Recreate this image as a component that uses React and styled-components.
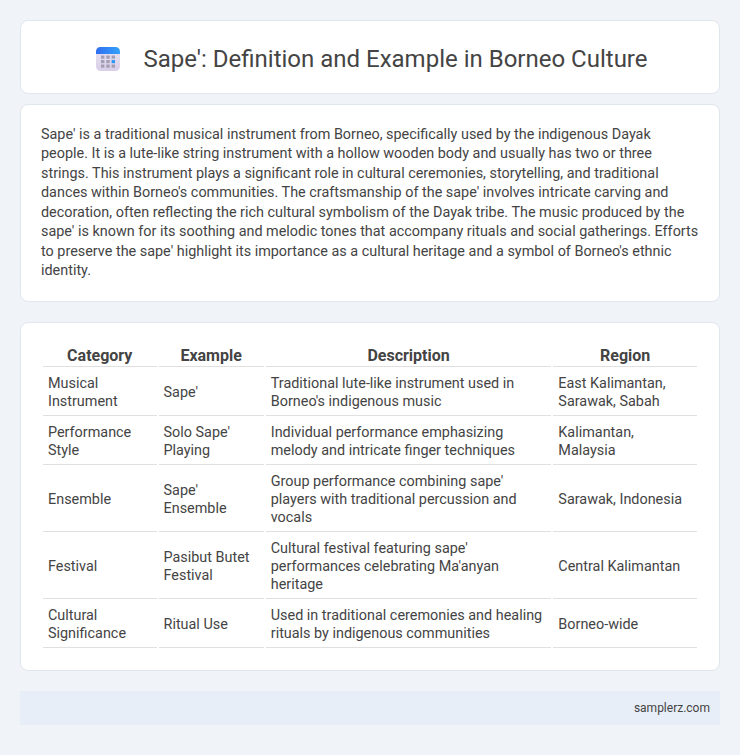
import React from 'react';
import styled, { createGlobalStyle } from 'styled-components';

const Global = createGlobalStyle`
  html, body { margin: 0; padding: 0; background: #f0f4f8; }
  body { font-family: Roboto, "Liberation Sans", sans-serif; color: #444; }
`;
const Page = styled.div`
  padding: 20px;
  display: flex;
  flex-direction: column;
`;
const Card = styled.section`
  background: #fff;
  border: 1px solid #e0e6ed;
  border-radius: 8px;
  box-sizing: border-box;
`;
const HeaderCard = styled(Card)`
  height: 74px;
  padding: 3px 0 0 4px;
  display: flex;
  align-items: center;
  justify-content: center;
  gap: 23px;
  margin-bottom: 10px;
`;
const Title = styled.h1`
  margin: 0;
  padding-top: 2px;
  font-size: 24px;
  font-weight: 400;
  line-height: 1.2;
  color: #444;
`;
const IntroCard = styled(Card)`
  height: 198px;
  padding: 20px 20px 0 20px;
  margin-bottom: 20px;
`;
const Intro = styled.p`
  margin: 0;
  font-size: 14.4px;
  line-height: 1.35;
  color: #444;
`;
const TableCard = styled(Card)`
  height: 349px;
  padding: 20px;
  margin-bottom: 20px;
`;
const Table = styled.table`
  width: 100%;
  border-collapse: separate;
  border-spacing: 2px;
  font-size: 14.4px;
  line-height: 18px;
  color: #444;
`;
const Th = styled.th`
  font-size: 16px;
  font-weight: 700;
  line-height: 20px;
  padding: 1px 5px 0;
  text-align: center;
  border-bottom: 1px solid #e0e0e0;
`;
const Td = styled.td`
  padding: 6px 5px 4px;
  text-align: left;
  border-bottom: 1px solid #e0e0e0;
`;
const Footer = styled.footer`
  height: 34px;
  background: #e8eef7;
  display: flex;
  align-items: center;
  justify-content: flex-end;
  padding-right: 10px;
  font-size: 12px;
  color: #444;
`;

const dotColumns = [5, 10.3, 15.6];
const dotRows = [8.5, 13, 17.5];

const CalendarIcon = () => (
  <svg width="24" height="24" viewBox="0 0 24 24" aria-hidden="true">
    <defs>
      <linearGradient id="bodyG" x1="0" y1="0" x2="0" y2="1">
        <stop offset="0" stopColor="#e8e3f1" />
        <stop offset="1" stopColor="#d9cfe8" />
      </linearGradient>
      <linearGradient id="topG" x1="0" y1="0" x2="1" y2="0">
        <stop offset="0" stopColor="#2f6df0" />
        <stop offset="1" stopColor="#35a2fa" />
      </linearGradient>
    </defs>
    <rect x="0" y="0" width="24" height="24" rx="4.5" fill="url(#bodyG)" />
    <path d="M0 7V4.5A4.5 4.5 0 0 1 4.5 0h15A4.5 4.5 0 0 1 24 4.5V7Z" fill="url(#topG)" />
    {dotRows.map((y, r) =>
      dotColumns.map((x, c) => (
        <rect
          key={`${r}-${c}`}
          x={x}
          y={y}
          width="3.4"
          height="3.2"
          fill={r === 1 && c === 2 ? '#2f96f5' : '#a49eb4'}
        />
      ))
    )}
  </svg>
);

const rows = [
  ['Musical Instrument', "Sape'", "Traditional lute-like instrument used in Borneo's indigenous music", 'East Kalimantan, Sarawak, Sabah'],
  ['Performance Style', "Solo Sape' Playing", 'Individual performance emphasizing melody and intricate finger techniques', 'Kalimantan, Malaysia'],
  ['Ensemble', "Sape' Ensemble", "Group performance combining sape' players with traditional percussion and vocals", 'Sarawak, Indonesia'],
  ['Festival', 'Pasibut Butet Festival', "Cultural festival featuring sape' performances celebrating Ma'anyan heritage", 'Central Kalimantan'],
  ['Cultural Significance', 'Ritual Use', 'Used in traditional ceremonies and healing rituals by indigenous communities', 'Borneo-wide'],
];

export default function App() {
  return (
    <Page>
      <Global />
      <HeaderCard>
        <CalendarIcon />
        <Title>Sape': Definition and Example in Borneo Culture</Title>
      </HeaderCard>
      <IntroCard>
        <Intro>
          Sape' is a traditional musical instrument from Borneo, specifically used by the indigenous Dayak people. It is a lute-like string instrument with a hollow wooden body and usually has two or three strings. This instrument plays a significant role in cultural ceremonies, storytelling, and traditional dances within Borneo's communities. The craftsmanship of the sape' involves intricate carving and decoration, often reflecting the rich cultural symbolism of the Dayak tribe. The music produced by the sape' is known for its soothing and melodic tones that accompany rituals and social gatherings. Efforts to preserve the sape' highlight its importance as a cultural heritage and a symbol of Borneo's ethnic identity.
        </Intro>
      </IntroCard>
      <TableCard>
        <Table>
          <thead>
            <tr>
              <Th>Category</Th>
              <Th>Example</Th>
              <Th>Description</Th>
              <Th>Region</Th>
            </tr>
          </thead>
          <tbody>
            {rows.map((r) => (
              <tr key={r[0]}>
                {r.map((c) => (
                  <Td key={c}>{c}</Td>
                ))}
              </tr>
            ))}
          </tbody>
        </Table>
      </TableCard>
      <Footer>samplerz.com</Footer>
    </Page>
  );
}
